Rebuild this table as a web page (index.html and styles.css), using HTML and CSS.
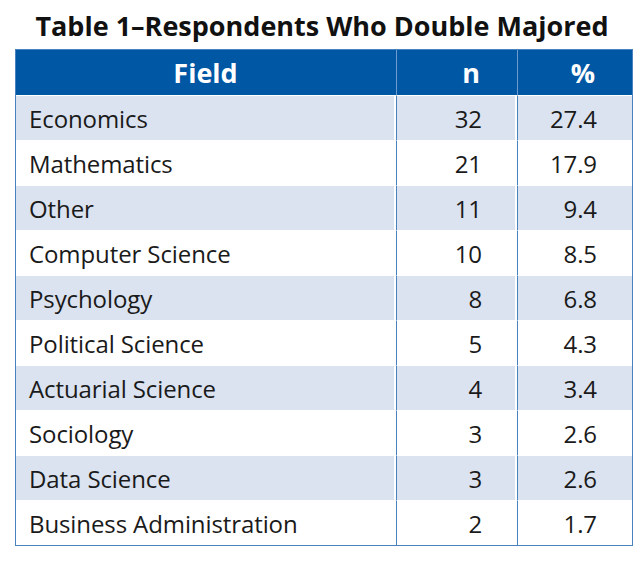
FILE: index.html
```html
<!DOCTYPE html>
<html>
<head>
<meta charset="utf-8">
<link rel="stylesheet" href="styles.css">
</head>
<body>
<div class="wrap">
  <h1 class="title">Table 1–Respondents Who Double Majored</h1>
  <table class="data">
    <thead>
      <tr><th class="c-field">Field</th><th class="c-n">n</th><th class="c-p">%</th></tr>
    </thead>
    <tbody>
      <tr><td class="c-field">Economics</td><td class="c-n">32</td><td class="c-p">27.4</td></tr>
      <tr><td class="c-field">Mathematics</td><td class="c-n">21</td><td class="c-p">17.9</td></tr>
      <tr><td class="c-field">Other</td><td class="c-n">11</td><td class="c-p">9.4</td></tr>
      <tr><td class="c-field">Computer Science</td><td class="c-n">10</td><td class="c-p">8.5</td></tr>
      <tr><td class="c-field">Psychology</td><td class="c-n">8</td><td class="c-p">6.8</td></tr>
      <tr><td class="c-field">Political Science</td><td class="c-n">5</td><td class="c-p">4.3</td></tr>
      <tr><td class="c-field">Actuarial Science</td><td class="c-n">4</td><td class="c-p">3.4</td></tr>
      <tr><td class="c-field">Sociology</td><td class="c-n">3</td><td class="c-p">2.6</td></tr>
      <tr><td class="c-field">Data Science</td><td class="c-n">3</td><td class="c-p">2.6</td></tr>
      <tr><td class="c-field">Business Administration</td><td class="c-n">2</td><td class="c-p">1.7</td></tr>
    </tbody>
  </table>
</div>
</body>
</html>
```
FILE: styles.css
```css
html, body {
  margin: 0;
  padding: 0;
  background: #ffffff;
}
.wrap {
  width: 644px;
  font-family: "Open Sans", "Liberation Sans", sans-serif;
}
.title {
  margin: 0;
  height: 49px;
  box-sizing: border-box;
  padding-top: 8px;
  text-align: center;
  font-size: 27px;
  line-height: 36px;
  font-weight: 700;
  letter-spacing: 0;
  color: #111111;
}
.data {
  margin-left: 15px;
  width: 618px;
  border-collapse: separate;
  border-spacing: 0;
  border: 1px solid #4a82bf;
  table-layout: fixed;
}
.data th {
  background: #0057a4;
  color: #ffffff;
  font-weight: 700;
  font-size: 27px;
  height: 45px;
  padding: 0;
  line-height: 45px;
  letter-spacing: 0;
}
.data td {
  font-size: 24px;
  color: #1a1a1a;
  height: 44px;
  padding: 0;
  border-top: 1px solid #ffffff;
  letter-spacing: -0.1px;
}
.data tbody tr:nth-child(odd) td {
  background: #dbe3f0;
}
.data .c-field {
  width: 379px;
  text-align: left;
  padding-left: 13px;
  border-right: 2px solid #ffffff;
}
.data th.c-field {
  text-align: center;
  padding-left: 0;
  border-right: 1px solid #0057a4;
}
.data .c-n {
  width: 83px;
  text-align: right;
  padding-right: 33px;
  border-left: 1px solid #4a82bf;
  border-right: 2px solid #ffffff;
}
.data th.c-n {
  border-right: 1px solid #0057a4;
  padding-right: 36px;
}
.data .c-p {
  text-align: right;
  padding-right: 35px;
  border-left: 1px solid #4a82bf;
}
.data th.c-p {
  padding-right: 37px;
}
.data th.c-n, .data th.c-p {
  border-left: 1px solid #6f9bd0;
}
```
